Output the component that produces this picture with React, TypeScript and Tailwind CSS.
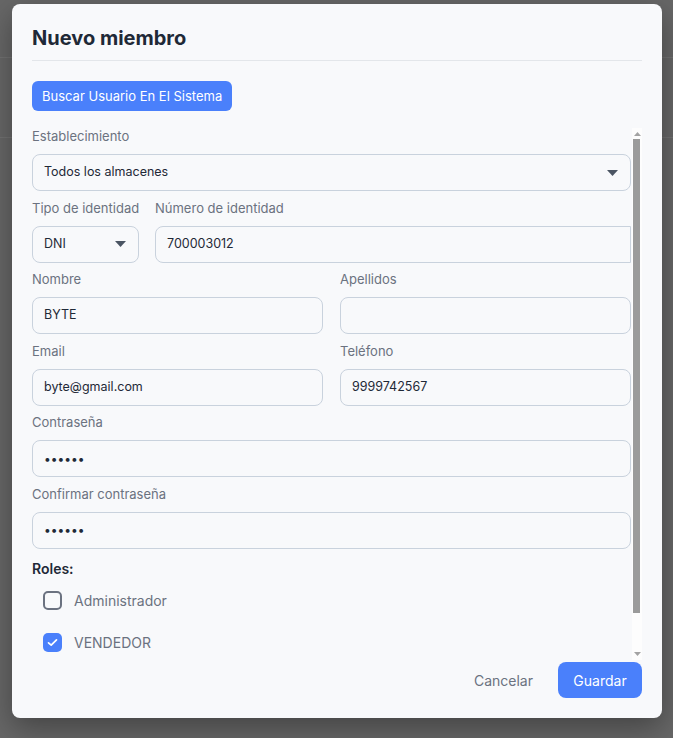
import React from "react";

const body = { fontFamily: "Inter, 'Noto Sans', sans-serif" } as React.CSSProperties;

function Caret() {
  return (
    <svg width="11" height="6" viewBox="0 0 11 6" className="shrink-0">
      <path d="M0 0 L11 0 L5.5 6 Z" fill="#4b5563" />
    </svg>
  );
}

function Label({ children }: { children: React.ReactNode }) {
  return <div className="text-[13px] leading-[16px] text-[#6b7280] mb-[10px] whitespace-nowrap">{children}</div>;
}

function Box({ children, className = "" }: { children?: React.ReactNode; className?: string }) {
  return (
    <div className={`h-[37px] border border-[#c9d2dd] bg-[#f8f9fb] flex items-center px-[11px] text-[12.5px] text-[#1f2937] ${className}`}>
      {children}
    </div>
  );
}

function ScrollBar() {
  return (
    <div className="w-[10px] shrink-0 bg-[#fdfdfd] flex flex-col items-center">
      <svg width="7" height="4" viewBox="0 0 7 4" className="mt-[4px]">
        <path d="M0 4 L7 4 L3.5 0 Z" fill="#a3a3a3" />
      </svg>
      <div className="mt-[3px] w-[7px] h-[474px] bg-[#9b9b9b] -ml-px" />
      <div className="flex-1" />
      <svg width="7" height="4" viewBox="0 0 7 4" className="mb-[4px]">
        <path d="M0 0 L7 0 L3.5 4 Z" fill="#a3a3a3" />
      </svg>
    </div>
  );
}

export default function App() {
  return (
    <div className="w-full h-[738px] bg-[#676767] relative overflow-hidden" style={body}>
      <div className="absolute left-0 right-0 top-[57px] h-px bg-[#727272]" />
      <div className="absolute left-0 right-0 top-[137px] h-px bg-[#727272]" />
      <div className="absolute left-[12px] top-[4px] w-[650px] h-[714px] bg-[#f8f9fb] rounded-[8px] shadow-[0_10px_30px_rgba(0,0,0,0.35)] flex flex-col px-[20px] pt-[20px] pb-[20px]">
        <div className="h-[28px] flex items-center text-[20px] font-bold text-[#1f2937] leading-[28px]">Nuevo miembro</div>
        <div className="mt-[8px] h-px bg-[#e3e6ea]" />
        <div className="mt-[20px]">
          <button className="h-[30px] px-[10px] rounded-[6px] bg-[#4a80fb] text-white text-[13px] leading-none">
            Buscar Usuario En El Sistema
          </button>
        </div>
        <div className="mt-[17px] h-[532px] flex">
          <div className="flex-1 overflow-hidden pr-px">
            <div className="flex flex-col gap-[8.6px]">
              <div>
                <Label>Establecimiento</Label>
                <Box className="rounded-[8px] justify-between pr-[12px]">
                  <span>Todos los almacenes</span>
                  <Caret />
                </Box>
              </div>
              <div className="flex gap-[16px]">
                <div className="w-[107px] shrink-0">
                  <Label>Tipo de identidad</Label>
                  <Box className="rounded-[8px] justify-between pr-[12px]">
                    <span>DNI</span>
                    <Caret />
                  </Box>
                </div>
                <div className="flex-1">
                  <Label>Número de identidad</Label>
                  <Box className="rounded-l-[8px]">700003012</Box>
                </div>
              </div>
              <div className="grid grid-cols-2 gap-x-[17px]">
                <div>
                  <Label>Nombre</Label>
                  <Box className="rounded-[8px]">BYTE</Box>
                </div>
                <div>
                  <Label>Apellidos</Label>
                  <Box className="rounded-[8px]" />
                </div>
              </div>
              <div className="grid grid-cols-2 gap-x-[17px]">
                <div>
                  <Label>Email</Label>
                  <Box className="rounded-[8px]">byte@gmail.com</Box>
                </div>
                <div>
                  <Label>Teléfono</Label>
                  <Box className="rounded-[8px]">9999742567</Box>
                </div>
              </div>
              <div>
                <Label>Contraseña</Label>
                <Box className="rounded-[8px] text-[12px]">••••••</Box>
              </div>
              <div>
                <Label>Confirmar contraseña</Label>
                <Box className="rounded-[8px] text-[12px]">••••••</Box>
              </div>
            </div>
            <div className="mt-[11px] text-[14px] font-semibold text-[#1f2937] leading-[18px]">Roles:</div>
            <div className="mt-[13px] pl-[11px] flex flex-col gap-[23px]">
              <div className="flex items-center gap-[12px]">
                <div className="w-[19px] h-[19px] rounded-[5px] border-2 border-[#6b7280]" />
                <span className="text-[14px] leading-[19px] text-[#6b7280]">Administrador</span>
              </div>
              <div className="flex items-center gap-[12px]">
                <div className="w-[19px] h-[19px] rounded-[5px] bg-[#4a80fb] flex items-center justify-center">
                  <svg width="11" height="9" viewBox="0 0 11 9">
                    <path d="M1.5 4.8 L4.2 7.2 L9.5 1.8" stroke="white" strokeWidth="1.7" fill="none" strokeLinecap="round" strokeLinejoin="round" />
                  </svg>
                </div>
                <span className="text-[14px] leading-[19px] text-[#6b7280]">VENDEDOR</span>
              </div>
            </div>
          </div>
          <ScrollBar />
        </div>
        <div className="mt-[2px] flex justify-end items-center gap-[9px]">
          <button className="h-[36px] px-[16px] text-[14px] text-[#6b7280]">Cancelar</button>
          <button className="h-[36px] w-[84px] rounded-[8px] bg-[#4a80fb] text-white text-[14px]">Guardar</button>
        </div>
      </div>
    </div>
  );
}
